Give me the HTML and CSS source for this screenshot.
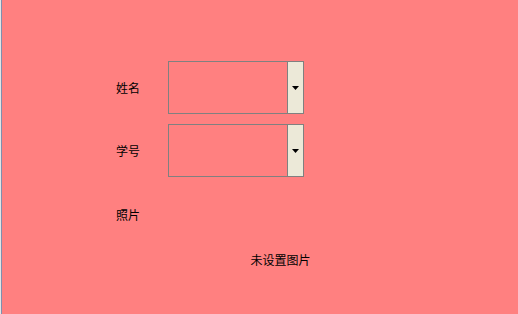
FILE: index.html
```html
<!DOCTYPE html>
<html lang="zh-CN">
<head>
    <meta charset="UTF-8">
    <meta name="viewport" content="width=device-width, initial-scale=1.0">
    <title>学生信息</title>
    <link rel="stylesheet" href="styles.css">
</head>
<body>

<div class="window">
    <div class="form">

        <!-- 姓名 -->
        <div class="row">
            <label class="label" for="name">姓名</label>
            <div class="combo" id="name">
                <div class="combo-field"></div>
                <div class="combo-btn">
                    <svg width="7" height="4" viewBox="0 0 7 4"><polygon points="0,0 7,0 3.5,4" fill="#000"/></svg>
                </div>
            </div>
        </div>

        <!-- 学号 -->
        <div class="row">
            <label class="label" for="number">学号</label>
            <div class="combo" id="number">
                <div class="combo-field"></div>
                <div class="combo-btn">
                    <svg width="7" height="4" viewBox="0 0 7 4"><polygon points="0,0 7,0 3.5,4" fill="#000"/></svg>
                </div>
            </div>
        </div>

        <!-- 照片 -->
        <div class="photo-row">
            <span class="label">照片</span>
        </div>
        <div class="photo-box">未设置图片</div>

    </div>
</div>

</body>
</html>
```

FILE: styles.css
```css
html, body {
    margin: 0;
    height: 100%;
}

body {
    background-color: #ff8080;
    border-left: 1px solid #e4e4e4;
    box-sizing: border-box;
    font-family: "Noto Sans CJK SC", "DejaVu Sans", sans-serif;
    font-size: 12px;
    line-height: 14px;
    color: #000;
}

.window {
    border-left: 1px solid #7f8fae;
    height: 100%;
}

.form {
    padding: 61px 0 0 114px;
}

.row {
    display: flex;
    align-items: center;
    margin-bottom: 10px;
}

.label {
    display: block;
    width: 52px;
}

.combo {
    display: flex;
    width: 136px;
    height: 53px;
    box-sizing: border-box;
    border: 1px solid #808080;
}

.combo-field {
    flex: 1;
}

.combo-btn {
    width: 15px;
    border-left: 1px solid #808080;
    background-color: #ece9d8;
    display: flex;
    align-items: center;
    justify-content: center;
}

.combo-btn svg {
    display: block;
    margin-top: 1px;
}

.photo-row {
    margin-top: 31px;
}

.photo-box {
    margin: 31px 0 0 52px;
    width: 225px;
    text-align: center;
}
```
